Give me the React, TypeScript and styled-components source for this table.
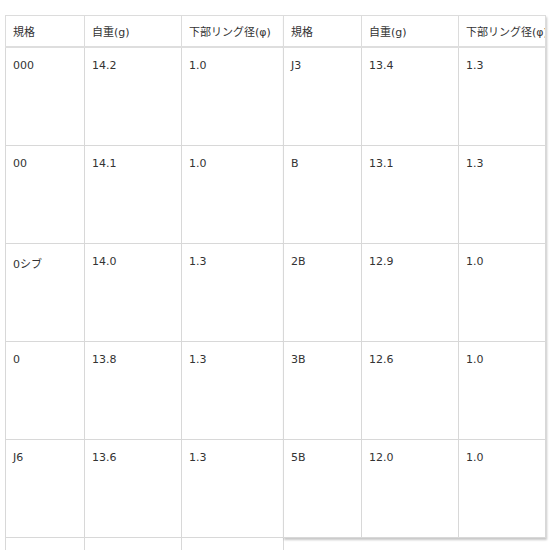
import React from "react";
import styled, { createGlobalStyle } from "styled-components";

const GlobalStyle = createGlobalStyle`
  html, body {
    margin: 0;
    padding: 0;
    background: #ffffff;
  }
  body {
    font-family: "DejaVu Sans", "Noto Sans CJK JP", sans-serif;
    font-size: 11px;
    color: #333333;
  }
`;

const Page = styled.div`
  display: flex;
  flex-direction: row;
  align-items: flex-start;
  padding: 15px 0 0 5px;
  height: 550px;
  box-sizing: border-box;
  overflow: hidden;
`;

const Table = styled.table<{ raised?: boolean }>`
  border-collapse: collapse;
  table-layout: fixed;
  background: #ffffff;
  position: relative;
  flex-shrink: 0;
  margin-left: ${(props) => (props.raised ? "-1px" : "0")};
  z-index: ${(props) => (props.raised ? 1 : 0)};
  box-shadow: ${(props) =>
    props.raised ? "1px 2px 2px rgba(0, 0, 0, 0.22)" : "none"};
`;

const HeadCell = styled.th`
  height: 30px;
  padding: 0 7px;
  text-align: left;
  font-weight: normal;
  vertical-align: middle;
  white-space: nowrap;
  overflow: hidden;
  border: 1px solid #dcdcdc;
  border-bottom: 2px solid #dedede;
`;

const Cell = styled.td`
  height: 86px;
  padding: 11px 7px 0;
  vertical-align: top;
  white-space: nowrap;
  border: 1px solid #d8d8d8;
`;

const leftRows = [
  ["000", "14.2", "1.0"],
  ["00", "14.1", "1.0"],
  ["0シブ", "14.0", "1.3"],
  ["0", "13.8", "1.3"],
  ["J6", "13.6", "1.3"],
  ["", "", ""],
];

const rightRows = [
  ["J3", "13.4", "1.3"],
  ["B", "13.1", "1.3"],
  ["2B", "12.9", "1.0"],
  ["3B", "12.6", "1.0"],
  ["5B", "12.0", "1.0"],
];

const headers = ["規格", "自重(g)", "下部リング径(φ)"];

const WeightTable = ({
  rows,
  widths,
  raised,
}: {
  rows: string[][];
  widths: number[];
  raised?: boolean;
}) => (
  <Table raised={raised} style={{ width: widths.reduce((a, b) => a + b, 0) }}>
    <colgroup>
      {widths.map((w, i) => (
        <col key={i} style={{ width: w }} />
      ))}
    </colgroup>
    <thead>
      <tr>
        {headers.map((h) => (
          <HeadCell key={h}>{h}</HeadCell>
        ))}
      </tr>
    </thead>
    <tbody>
      {rows.map((row, i) => (
        <tr key={i}>
          {row.map((v, j) => (
            <Cell key={j}>{v}</Cell>
          ))}
        </tr>
      ))}
    </tbody>
  </Table>
);

const App = () => (
  <>
    <GlobalStyle />
    <Page>
      <WeightTable rows={leftRows} widths={[79, 97, 102]} />
      <WeightTable rows={rightRows} widths={[78, 97, 87]} raised />
    </Page>
  </>
);

export default App;
